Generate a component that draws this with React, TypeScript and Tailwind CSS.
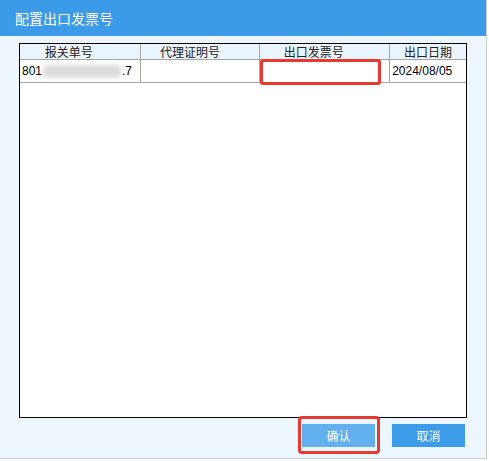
import React from "react"

const cols = [
  { name: "报关单号", w: 121, pr: "pr-[22px]" },
  { name: "代理证明号", w: 120, pr: "pr-[20px]" },
  { name: "出口发票号", w: 130, pr: "pr-[22px]" },
  { name: "出口日期", w: 76, pr: "" },
]

export default function App() {
  return (
    <div className="w-[489px] h-[461px] bg-white font-['Noto_Sans_CJK_SC',sans-serif]">
      <div className="relative w-[487px] h-[459px] flex flex-col border-r border-b border-[#c9ced4] bg-[#eef6fd]">
        {/* Title bar */}
        <div className="h-[36px] bg-[#3c9be8] flex items-center px-[15px] text-white text-[14px]">
          配置出口发票号
        </div>

        {/* Grid */}
        <div className="pt-[7px] pl-[19px]">
          <div className="w-[448px] h-[375px] bg-white border border-black">
            <div className="flex h-[16px] bg-[#eaf4fc] border-b border-[#a6a6a6]">
              {cols.map((c, i) => (
                <div
                  key={c.name}
                  style={{ width: c.w }}
                  className={
                    "flex items-center justify-center text-[12px] leading-none text-[#222] " +
                    c.pr +
                    (i < cols.length - 1 ? " border-r border-[#a6a6a6]" : "")
                  }
                >
                  {c.name}
                </div>
              ))}
            </div>
            <div className="flex h-[23px] border-b border-[#a6a6a6] text-[12px] text-black font-['Liberation_Sans',sans-serif]">
              <div className="w-[121px] border-r border-[#a6a6a6] flex items-center pl-[2px]">
                <span>801</span>
                <div className="w-[78px] h-[13px] mx-[1px] bg-[#dcdcdc] blur-[2px] rounded" />
                <span>.7</span>
              </div>
              <div className="w-[120px] border-r border-[#a6a6a6]" />
              <div className="w-[130px] border-r border-[#a6a6a6]" />
              <div className="w-[76px] flex items-center pl-[2px]">2024/08/05</div>
            </div>
          </div>
        </div>

        {/* Buttons */}
        <div className="flex justify-end gap-[17px] pt-[6px] pr-[21px]">
          <button className="w-[73px] h-[23px] bg-[#62b0ee] text-white text-[12px]">确认</button>
          <button className="w-[73px] h-[23px] bg-[#3d9ce8] text-white text-[12px]">取消</button>
        </div>

        {/* annotation highlights */}
        <div className="absolute left-[260px] top-[59px] w-[121px] h-[26px] border-[3px] border-[#e63a30] rounded-[3px]" />
        <div className="absolute left-[298px] top-[416px] w-[82px] h-[38px] border-[3px] border-[#e63a30] rounded-[4px]" />
      </div>
    </div>
  )
}
